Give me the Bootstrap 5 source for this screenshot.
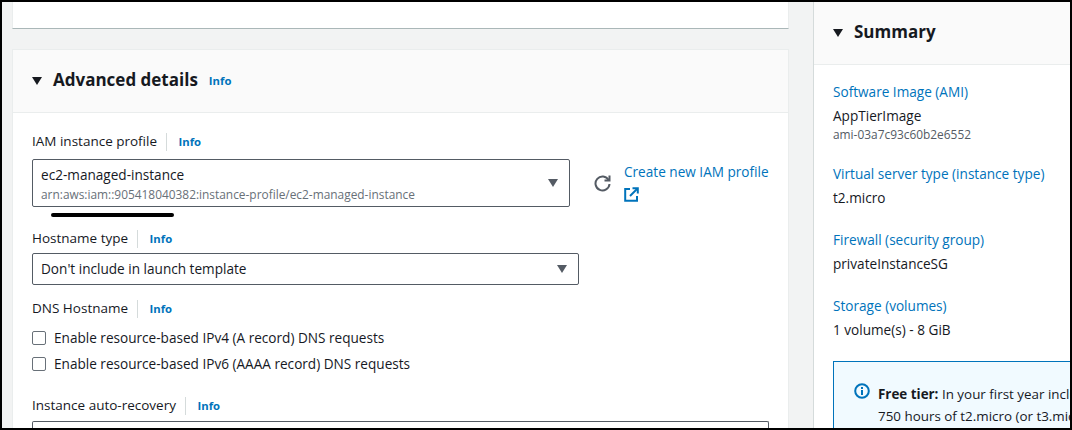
<!DOCTYPE html>
<html>
  <head>
    <link href="https://cdn.jsdelivr.net/npm/bootstrap@5.3.3/dist/css/bootstrap.min.css" rel="stylesheet">
    <style>
      html, body { height: 100%; }
      body { background: #000; overflow: hidden; font-family: "Open Sans", "Noto Sans", sans-serif; font-size: 13.6px; color: #16191f; }
      .shot-frame { height: 430px; border: 2px solid #000; background: #f2f3f3; overflow: hidden; }
      .main-col { width: 787px; padding-left: 10px; flex: none; }
      .side-col { width: 257px; margin-left: 24px; flex: none; background: #fff; border-left: 1px solid #d5dbdb; }
      .top-stub { height: 27px; background: #fff; border: 1px solid #eaeded; border-top: 0; border-bottom: 1px solid #aab7b8; }
      .adv-card { margin-top: 20px; background: #fff; border: 1px solid #eaeded; border-bottom: 0; position: relative; height: 400px; }
      .adv-head { height: 63px; background: #fafafa; border-bottom: 1px solid #eaeded; padding-left: 19px; }
      .adv-body { padding: 0 19px; }
      .caret-tri { width: 0; height: 0; border-left: 5.5px solid transparent; border-right: 5.5px solid transparent; border-top: 8px solid #16191f; display: inline-block; }
      .head-title { font-size: 17px; font-weight: 700; color: #16191f; line-height: 22px; margin-left: 3px; margin-top: -2px; }
      .info-link { font-size: 11.3px; font-weight: 700; color: #0073bb; text-decoration: none; }
      .head-info { margin-left: 11px; }
      .field-label { height: 18px; line-height: 18px; font-size: 13.5px; color: #16191f; margin-top: 14px; }
      .field-label .info-link { border-left: 1px solid #d5dbdb; padding-left: 12px; margin-left: 5px; line-height: 18px; display: inline-block; }
      .select-box { border: 1px solid #545b64; border-radius: 2px; background: #fff; padding-left: 8px; padding-right: 11px; }
      .select-tri { width: 0; height: 0; border-left: 5.5px solid transparent; border-right: 5.5px solid transparent; border-top: 8px solid #545b64; flex: none; }
      .profile-select { width: 538px; height: 48px; flex: none; margin-top: 9px; }
      .select-main { line-height: 18px; margin-top: 1px; margin-bottom: 2px; }
      .select-sub { font-size: 11.9px; line-height: 16px; color: #687078; }
      .host-select { width: 547px; height: 32px; margin-top: 6px; }
      .ink-line { position: absolute; left: 38px; top: 163px; width: 123px; height: 4px; background: #000; border-radius: 2px; }
      .new-link { color: #0073bb; text-decoration: none; line-height: 18px; display: block; margin-top: 4px; }
      .new-link-wrap { margin-top: 9px; }
      .fake-check { width: 14px; height: 14px; border: 1px solid #687078; border-radius: 2px; background: #fff; flex: none; }
      .check-row { height: 26px; }
      .recovery-stub { height: 10px; border: 1px solid #545b64; border-bottom: 0; border-radius: 2px 2px 0 0; margin-top: 7px; }
      .side-head { height: 63px; border-bottom: 1px solid #eaeded; padding-left: 19px; background: #fafafa; }
      .side-body { padding: 18px 0 0 19px; }
      .sum-link { color: #0073bb; text-decoration: none; line-height: 18px; display: block; white-space: nowrap; }
      .sum-val { line-height: 18px; margin-top: 6px; white-space: nowrap; }
      .sum-sub { font-size: 11.9px; line-height: 14px; color: #545b64; margin-top: 2px; }
      .sum-item { margin-bottom: 24px; }
      .free-box { border: 1px solid #0073bb; background: #f1faff; width: 300px; height: 90px; padding: 21px 0 0 20px; margin-top: -2px; white-space: nowrap; line-height: 22px; font-size: 13.4px; }
    </style>
  </head>
  <body>
    <div class="shot-frame d-flex">
      <div class="main-col">
        <div class="top-stub"></div>
        <div class="adv-card">
          <div class="adv-head d-flex align-items-center">
            <span class="caret-tri me-2"></span>
            <span class="head-title">Advanced details</span>
            <a class="info-link head-info" href="#">Info</a>
          </div>
          <div class="adv-body">
            <div class="field-label" style="margin-top:19px">IAM instance profile <a class="info-link" href="#">Info</a></div>
            <div class="d-flex">
              <div class="select-box profile-select d-flex align-items-center justify-content-between">
                <div>
                  <div class="select-main">ec2-managed-instance</div>
                  <div class="select-sub">arn:aws:iam::905418040382:instance-profile/ec2-managed-instance</div>
                </div>
                <span class="select-tri"></span>
              </div>
              <svg class="ms-4" style="margin-top:24px" width="18" height="18" viewBox="0 0 18 18" fill="none" stroke="#545b64" stroke-width="2"><path d="M14.6 6a7 7 0 1 0 .9 4"/><path d="M15.5 1.5v5h-5" fill="none"/></svg>
              <div class="ms-2 ps-1 new-link-wrap">
                <a class="new-link" href="#">Create new IAM profile</a>
                <svg style="margin-top:5px" width="15" height="15" viewBox="0 0 15 15" fill="none" stroke="#0073bb" stroke-width="2"><path d="M6 2H1.2v11.8H13V9"/><path d="M6 9l7-7"/><path d="M8.5 1.2h5.3v5.3"/></svg>
              </div>
            </div>
            <div class="field-label" style="margin-top:22px">Hostname type <a class="info-link" href="#">Info</a></div>
            <div class="select-box host-select d-flex align-items-center justify-content-between">
              <span>Don't include in launch template</span>
              <span class="select-tri"></span>
            </div>
            <div class="field-label">DNS Hostname <a class="info-link" href="#">Info</a></div>
            <div class="check-row d-flex align-items-center gap-2 mt-2"><span class="fake-check"></span><span>Enable resource-based IPv4 (A record) DNS requests</span></div>
            <div class="check-row d-flex align-items-center gap-2"><span class="fake-check"></span><span>Enable resource-based IPv6 (AAAA record) DNS requests</span></div>
            <div class="field-label" style="margin-top:19px">Instance auto-recovery <a class="info-link" href="#">Info</a></div>
            <div class="recovery-stub"></div>
          </div>
          <div class="ink-line"></div>
        </div>
      </div>
      <div class="side-col">
        <div class="side-head d-flex align-items-center">
          <span class="caret-tri me-2"></span>
          <span class="head-title">Summary</span>
        </div>
        <div class="side-body">
          <div class="sum-item">
            <a class="sum-link" href="#">Software Image (AMI)</a>
            <div class="sum-val">AppTierImage</div>
            <div class="sum-sub">ami-03a7c93c60b2e6552</div>
          </div>
          <div class="sum-item">
            <a class="sum-link" href="#">Virtual server type (instance type)</a>
            <div class="sum-val">t2.micro</div>
          </div>
          <div class="sum-item">
            <a class="sum-link" href="#">Firewall (security group)</a>
            <div class="sum-val">privateInstanceSG</div>
          </div>
          <div class="sum-item">
            <a class="sum-link" href="#">Storage (volumes)</a>
            <div class="sum-val">1 volume(s) - 8 GiB</div>
          </div>
          <div class="free-box d-flex gap-2">
            <svg width="16" height="16" viewBox="0 0 16 16"><circle cx="8" cy="8" r="6.8" fill="none" stroke="#0073bb" stroke-width="2"/><rect x="7" y="7" width="2" height="5" fill="#0073bb"/><rect x="7" y="4" width="2" height="2" fill="#0073bb"/></svg>
            <div><b>Free tier:</b> In your first year includes<br>750 hours of t2.micro (or t3.micro</div>
          </div>
        </div>
      </div>
    </div>
    <script src="https://cdn.jsdelivr.net/npm/bootstrap@5.3.3/dist/js/bootstrap.bundle.min.js"></script>
  </body>
</html>
